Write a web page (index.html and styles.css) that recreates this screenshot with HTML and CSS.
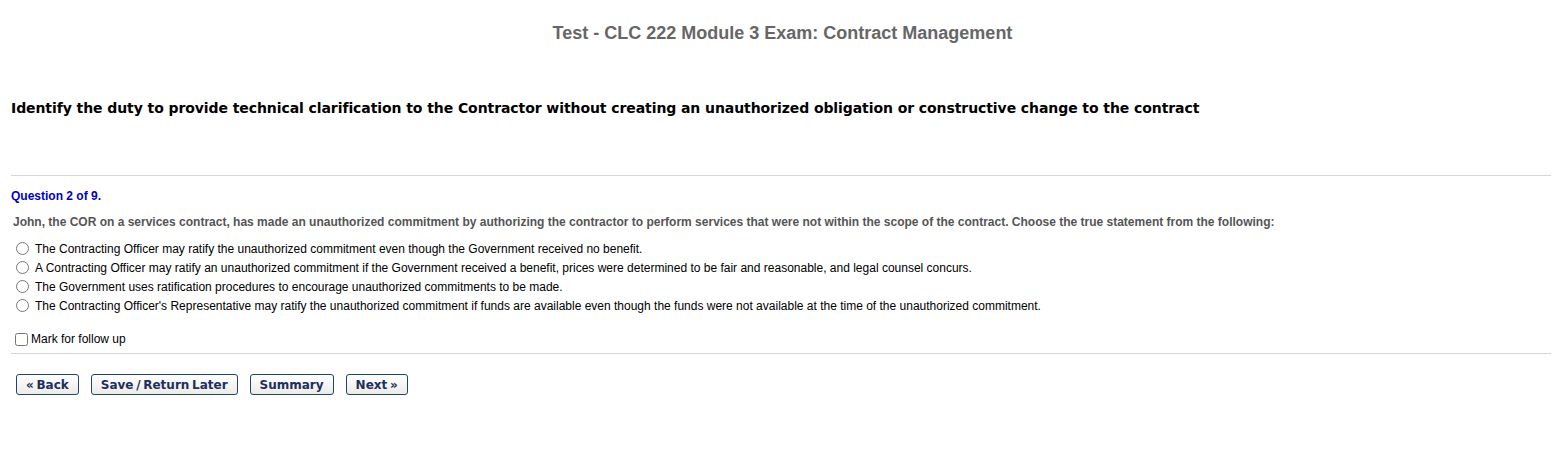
FILE: index.html
```html
<!DOCTYPE html>
<html>
<head>
  <title>Test - CLC 222 Module 3 Exam</title>
  <link rel="stylesheet" href="styles.css">
</head>
<body>
  <h1 class="test-title">Test - CLC 222 Module 3 Exam: Contract Management</h1>
  <div class="page">
    <h2 class="objective">Identify the duty to provide technical clarification to the Contractor without creating an unauthorized obligation or constructive change to the contract</h2>
    <hr class="rule">

    <!-- question -->
    <div class="q-count">Question 2 of 9.</div>
    <div class="q-text">John, the COR on a services contract, has made an unauthorized commitment by authorizing the contractor to perform services that were not within the scope of the contract. Choose the true statement from the following:</div>
    <div class="answers">
      <label class="answer"><input type="radio" name="ans">The Contracting Officer may ratify the unauthorized commitment even though the Government received no benefit.</label>
      <label class="answer"><input type="radio" name="ans">A Contracting Officer may ratify an unauthorized commitment if the Government received a benefit, prices were determined to be fair and reasonable, and legal counsel concurs.</label>
      <label class="answer"><input type="radio" name="ans">The Government uses ratification procedures to encourage unauthorized commitments to be made.</label>
      <label class="answer"><input type="radio" name="ans">The Contracting Officer's Representative may ratify the unauthorized commitment if funds are available even though the funds were not available at the time of the unauthorized commitment.</label>
    </div>
    <label class="follow-up"><input type="checkbox">Mark for follow up</label>
    <hr class="rule rule-bottom">

    <div class="nav-buttons">
      <button class="btn">&laquo; Back</button>
      <button class="btn">Save / Return Later</button>
      <button class="btn">Summary</button>
      <button class="btn">Next &raquo;</button>
    </div>
  </div>
</body>
</html>
```

FILE: styles.css
```css
body {
  margin: 0;
  font-family: "Liberation Sans", Arial, sans-serif;
  font-size: 12px;
  color: #000;
  background: #fff;
}
/* page title */
.test-title {
  margin: 0;
  padding-top: 22px;
  line-height: 22px;
  font-size: 18px;
  font-weight: bold;
  color: #666;
  text-align: center;
}
.page {
  padding: 0 14px 0 11px;
}
.objective {
  margin: 54px 0 0;
  line-height: 20px;
  font-family: "DejaVu Sans", Verdana, sans-serif;
  font-size: 14px;
  letter-spacing: -0.08px;
  font-weight: bold;
  color: #000;
}
.rule {
  margin: 57px 0 0;
  border: 0;
  border-top: 1px solid #d6d6d6;
  height: 0;
}
.rule-bottom {
  margin-top: 6px;
}
/* question block */
.q-count {
  margin-top: 12px;
  line-height: 16px;
  font-weight: bold;
  color: #0000cc;
}
.q-text {
  margin: 10px 0 0 2px;
  line-height: 16px;
  font-weight: bold;
  color: #555;
}
.answers {
  margin-top: 9px;
}
.answer {
  display: flex;
  align-items: center;
  height: 19px;
}
.answer input {
  margin: 0 6px 0 5px;
  width: 13px;
  height: 13px;
}
.follow-up {
  display: flex;
  align-items: center;
  height: 16px;
  margin-top: 16px;
}
.follow-up input {
  margin: 0 3px 0 4px;
  width: 13px;
  height: 13px;
}
/* buttons */
.nav-buttons {
  display: flex;
  gap: 12px;
  margin: 20px 0 0 5px;
}
.btn {
  height: 21px;
  padding: 0 9px;
  font-family: "DejaVu Sans", Verdana, sans-serif;
  font-size: 12px;
  word-spacing: -1.5px;
  font-weight: bold;
  color: #1c2f5e;
  background: linear-gradient(#ffffff, #ecebe6);
  border: 1px solid #1d4473;
  border-radius: 3px;
  cursor: pointer;
}
```
